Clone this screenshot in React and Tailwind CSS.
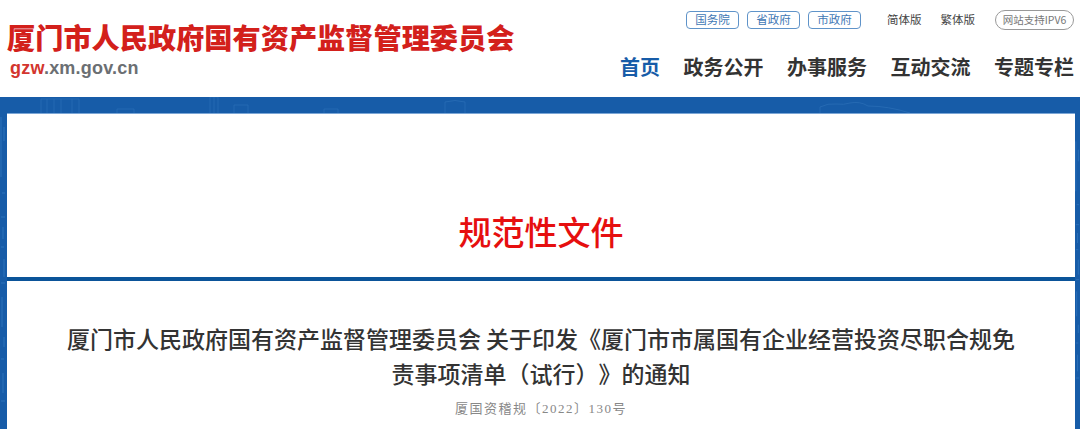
const TOP_LINKS = ['国务院', '省政府', '市政府'];
const NAV = ['首页', '政务公开', '办事服务', '互动交流', '专题专栏'];

const cjk = 'font-["Noto_Sans_CJK_SC","Liberation_Sans",sans-serif]';

// faint skyline painted into the blue frame
function Skyline({ className }) {
  return (
    <svg className={className} viewBox="0 0 1080 16" fill="none" stroke="#3b7fc4" strokeWidth="1" opacity="0.4">
      <path d="M41 16V2h38v14M47 2v14M54 2v14M61 2v14M72 2v14" />
      <path d="M117 16V12h17v4" />
      <path d="M210 16V0h8v16M214 0v16M234 16V8h14v8" />
      <path d="M324 16V12h14v4" />
      <path d="M445 16V5q10-3 20 0v11" />
      <path d="M820 16V10q8-4 16-3t14-1q10-2 18 3q20 0 42 7" />
    </svg>
  );
}

// dotted texture along the left and right frame edges
function EdgeTexture({ className }) {
  return (
    <svg className={className} viewBox="0 0 6 332" fill="none" stroke="#3f86cc" strokeWidth="1" opacity="0.55">
      <path d="M1 20v60M4 30v14M2 96h3M1 120h4M3 130v12M1 150h3M4 162v18M1 186h4M2 200v30M4 240v10M1 262h3M3 276v20M1 304h4" />
    </svg>
  );
}

export default function App() {
  return (
    <div className={`w-[1080px] h-[429px] overflow-hidden bg-white ${cjk}`}>
      <header className="h-[97px] flex justify-between">
        <div className="pl-[7px] pt-[20px]">
          <div className="text-[28.2px] leading-[34px] font-black text-[#d3201b] whitespace-nowrap">
            厦门市人民政府国有资产监督管理委员会
          </div>
          <div className="pl-[3px] pt-[4px] text-[18px] leading-[20px] font-semibold font-['Liberation_Sans',sans-serif] tracking-[0.2px] text-[#6b6f73]">
            <span className="text-[#d3352e]">gzw</span>.xm.gov.cn
          </div>
        </div>

        <div className="pr-[6px] pt-[11px] flex flex-col items-end">
          <div className="flex items-center h-[18px]">
            {TOP_LINKS.map((t) => (
              <span key={t} className="ml-[8px] w-[53px] h-[18px] flex items-center justify-center rounded-[4px] border border-[#5f93c9] text-[11.5px] text-[#3f78b5]">
                {t}
              </span>
            ))}
            <span className="ml-[26px] text-[11.5px] text-[#444]">简体版</span>
            <span className="ml-[19px] text-[11.5px] text-[#444]">繁体版</span>
            <span className="ml-[20px] w-[79px] h-[20px] flex items-center justify-center rounded-full border border-[#999] text-[10.5px] text-[#777] whitespace-nowrap">
              网站支持IPV6
            </span>
          </div>
          <nav className="flex gap-[23.5px] mt-[25px]">
            {NAV.map((t, i) => (
              <span key={t} className={`text-[20px] leading-[26px] font-bold whitespace-nowrap ${i === 0 ? 'text-[#175ca8]' : 'text-[#333]'}`}>
                {t}
              </span>
            ))}
          </nav>
        </div>
      </header>

      <main className="relative h-[332px] bg-[#175ca8] pl-[7px] pr-[5px] pt-[16px]">
        <Skyline className="absolute left-0 top-0 w-[1080px] h-[16px]" />
        <EdgeTexture className="absolute left-0 top-0 w-[6px] h-[332px]" />
        <EdgeTexture className="absolute right-0 top-0 w-[5px] h-[332px]" />
        <section className="relative h-[164px] bg-white border-t border-[#7ba6d6] flex items-end justify-center pb-[25px]">
          <h1 className="text-[33px] leading-[42px] text-[#e60f0f] font-medium">规范性文件</h1>
        </section>
        <div className="relative h-[4px] bg-[#0b5499]" />
        <section className="relative bg-white h-[148px] pt-[40px] text-center [text-spacing-trim:space-all]">
          <h2 className="text-[23px] leading-[35px] font-medium text-[#333] whitespace-nowrap">
            厦门市人民政府国有资产监督管理委员会 关于印发《厦门市市属国有企业经营投资尽职合规免
            <br />
            责事项清单（试行）》的通知
          </h2>
          <p className="mt-[8px] text-[13px] leading-[20px] tracking-[1.5px] text-[#888] font-['Liberation_Serif','Noto_Sans_CJK_SC',serif]">
            厦国资稽规〔2022〕130号
          </p>
        </section>
      </main>
    </div>
  );
}
